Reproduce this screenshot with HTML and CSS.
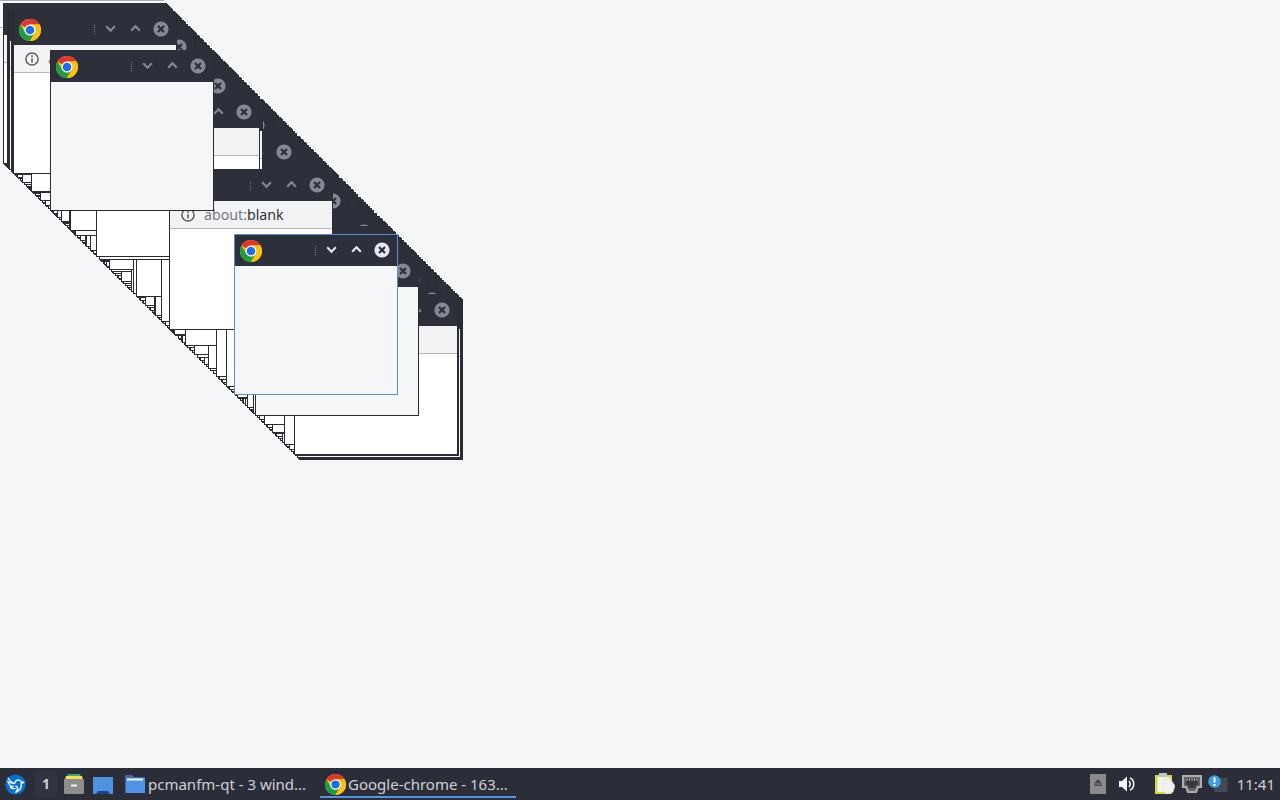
FILE: index.html
```html
<!DOCTYPE html>
<html lang="en">
<head>
  <meta charset="UTF-8">
  <title>Desktop</title>
  <link rel="stylesheet" href="styles.css">
</head>
<body>
  <svg class="defs" width="0" height="0">
    <symbol id="chrome" viewBox="0 0 24 24">
      <circle cx="12" cy="12" r="12" fill="#fbc116"/>
      <path d="M12 12 1.6 6A12 12 0 0 1 22.4 6H12z" fill="#dc3a30"/>
      <path d="M1.6 6A12 12 0 0 0 12 24l5.2-9-5.2 3-5.2-3z" fill="#249a45"/>
      <path d="M12 24A12 12 0 0 0 22.4 6H12l5.2 9z" fill="#fbc116"/>
      <circle cx="12" cy="12" r="6" fill="#fff"/>
      <circle cx="12" cy="12" r="4.7" fill="#1b6fe0"/>
    </symbol>
    <symbol id="down" viewBox="0 0 12 12"><path d="M2 4l4 4 4-4" fill="none" stroke="currentColor" stroke-width="2"/></symbol>
    <symbol id="up" viewBox="0 0 12 12"><path d="M2 8l4-4 4 4" fill="none" stroke="currentColor" stroke-width="2"/></symbol>
    <symbol id="close" viewBox="0 0 16 16">
      <circle cx="8" cy="8" r="7.6" fill="currentColor"/>
      <path d="M5 5l6 6M11 5l-6 6" stroke="#2b2e39" stroke-width="2.2"/>
    </symbol>
    <symbol id="info" viewBox="0 0 14 14">
      <circle cx="7" cy="7" r="6.1" fill="none" stroke="#5c5f63" stroke-width="1.5"/>
      <path d="M7 6.2v4.3M7 3.3v1.6" stroke="#5c5f63" stroke-width="1.6"/>
    </symbol>
  </svg>

  <main class="desktop" id="desktop">
    <div class="back-window"></div>
  </main>

  <footer class="panel">
    <svg class="menu" viewBox="0 0 22 22">
      <circle cx="11" cy="11" r="10.6" fill="#0870cf"/>
      <path d="M3 4c2 4 4 5 7 6-3 0-5-1-7-2 1 3 3 5 6 5-2 1-3 1-4 0 1 2 3 3 6 2" fill="none" stroke="#e2effb" stroke-width="1.3"/>
      <path d="M10 10c1-4 5-5 7-2l3 1-3 .5c1 5-2 8-6 10 3-4 3-6 0-7" fill="none" stroke="#e2effb" stroke-width="1.6"/>
    </svg>
    <span class="pager">1</span>
    <svg class="cabinet" viewBox="0 0 20 20">
      <path d="M4 0h12l1 3H3z" fill="#43a878"/>
      <path d="M2 2h16l1 4H1z" fill="#f3df55"/>
      <rect y="5" width="20" height="15" rx="1" fill="#8d8d8d"/>
      <rect x="7" y="10.5" width="6" height="2" fill="#f4f4f4"/>
    </svg>
    <svg class="show-desktop" viewBox="0 0 20 17">
      <rect width="20" height="17" fill="#4f92e0"/>
      <path d="M5 14h10l2 3H3z" fill="#1c4386"/>
    </svg>
    <div class="task">
      <svg class="folder" viewBox="0 0 20 18">
        <path d="M0 0h7l2 2h11v16H0z" fill="#426aa6"/>
        <path d="M1 3h19v15H1z" fill="#4f92e6"/>
        <path d="M2 3.5h16v2H2z" fill="#eef5ff"/>
      </svg>
      <span>pcmanfm-qt - 3 wind...</span>
    </div>
    <div class="task current">
      <svg class="logo" viewBox="0 0 24 24"><use href="#chrome"/></svg>
      <span>Google-chrome - 163...</span>
    </div>
    <div class="tray">
      <svg class="eject" viewBox="0 0 16 20">
        <rect width="16" height="20" fill="#8b8b8b"/>
        <path d="M8 5l4 4.5H4zM4 10.5h8V12H4z" fill="#45474c"/>
      </svg>
      <svg class="volume" viewBox="0 0 16 16">
        <path d="M0 5h3l5-4.5v15L3 11H0z" fill="#f5f5f5"/>
        <path d="M10 5c1.7 2 1.7 4 0 6M11 2c5 2 5 10 0 12" fill="none" stroke="#f5f5f5" stroke-width="1.5"/>
      </svg>
      <svg class="clip" viewBox="0 0 20 22">
        <rect y="2" width="17" height="19" fill="#d2d848"/>
        <rect x="2.5" y="4" width="12" height="15" fill="#f4f4ea"/>
        <rect x="4" y="0" width="8" height="4" fill="#c4c6bd"/>
        <path d="M9 7l6-2 5 8-2 6-7 2-4-6z" fill="#f1f1f1" stroke="#d5d5d5" stroke-width=".5"/>
      </svg>
      <svg class="net" viewBox="0 0 20 18">
        <path d="M1 1h18v11h-3l-2 5H6l-2-5H1z" fill="#62646a" stroke="#aeaeae" stroke-width="2"/>
        <path d="M4 3h12v7h-2l-1 3H7l-1-3H4z" fill="#37393e"/>
        <path d="M5 3v3M7.5 3v3M10 3v3M12.5 3v3M15 3v3" stroke="#b5b5b5"/>
      </svg>
      <svg class="notify" viewBox="0 0 20 18">
        <rect x="6" y="3" width="13.5" height="14" fill="#454955"/>
        <circle cx="6.5" cy="6.5" r="6.3" fill="#3f9fdc"/>
        <path d="M6.5 2.5v5M6.5 9v2" stroke="#fff" stroke-width="2"/>
      </svg>
      <span class="clock">11:41</span>
    </div>
  </footer>
  <script src="script.js"></script>
</body>
</html>
```
FILE: styles.css
```css
* {
  box-sizing: border-box;
}
body {
  margin: 0;
  height: 100vh;
  display: flex;
  flex-direction: column;
  overflow: hidden;
  background: #f4f6f8;
  font-family: "Noto Sans", "Open Sans", sans-serif;
}
svg {
  display: block;
  flex: none;
}
.defs {
  position: absolute;
}
.desktop {
  flex: 1;
  position: relative;
  overflow: hidden;
}
.back-window {
  width: 164px;
  height: 28px;
  border-top: 1px solid #a9adb6;
  border-bottom: 1px solid #b4b7be;
  background: #f7f9fb;
}

/* cascaded windows */
.window {
  position: absolute;
  width: 164px;
  height: 161px;
  border: 1px solid #292c32;
  border-top-color: #2d303b;
  background: #fff;
  overflow: hidden;
}
.window.plain {
  background: #f4f6f8;
}
.window.active {
  border-color: #5d8ccd;
}
.titlebar {
  height: 31px;
  padding: 0 7px 2px 5px;
  display: flex;
  align-items: center;
  background: #2d303b;
  color: #868993;
}
.active .titlebar {
  color: #e3e8f2;
}
.titlebar .logo {
  width: 22px;
  height: 22px;
  margin-top: 2px;
}
.caption {
  width: 3px;
  height: 9px;
  margin: 1px 0 0 53px;
  overflow: hidden;
  border-left: 1px dotted #777b85;
}
.titlebar .arrow {
  width: 13px;
  height: 13px;
}
.arrow.first {
  margin-left: 7px;
}
.arrow.second {
  margin-left: 12px;
}
.titlebar .close {
  width: 16px;
  height: 16px;
  margin-left: auto;
}
.toolbar {
  height: 28px;
  padding: 1px 0 0 11px;
  display: flex;
  align-items: center;
  gap: 9px;
  background: #f2f3f5;
  border-bottom: 1px solid #b5b6b9;
  font-size: 14.2px;
  color: #303236;
  white-space: nowrap;
}
.toolbar > span {
  margin-top: -1px;
}
.toolbar svg {
  width: 14px;
  height: 14px;
}
.scheme {
  color: #77797d;
}

/* bottom panel */
.panel {
  height: 32px;
  display: flex;
  align-items: center;
  padding: 0 5px;
  background: #2b2e39;
  color: #cfd1d6;
  font-size: 15px;
}
.menu {
  width: 21px;
  height: 21px;
}
.pager {
  width: 22px;
  height: 28px;
  margin-left: 9px;
  line-height: 28px;
  text-align: center;
  font-weight: bold;
  font-size: 14px;
  background: #313440;
}
.cabinet {
  width: 20px;
  height: 20px;
  margin-left: 7px;
}
.show-desktop {
  width: 20px;
  height: 17px;
  margin: 2px 0 0 9px;
}
.task {
  width: 196px;
  height: 32px;
  margin-left: 7px;
  padding: 0 0 0 5px;
  display: flex;
  align-items: center;
  gap: 3px;
  white-space: nowrap;
}
.task span,
.clock {
  padding-bottom: 1px;
}
.task.current {
  margin-left: 4px;
  background: linear-gradient(#5294e2, #5294e2) 0 28px / 100% 2px no-repeat;
}
.folder {
  width: 20px;
  height: 18px;
}
.task .logo {
  width: 21px;
  height: 21px;
  margin-right: -1px;
}
.tray {
  margin-left: auto;
  display: flex;
  align-items: center;
}
.eject {
  width: 16px;
  height: 20px;
}
.volume {
  width: 16px;
  height: 16px;
  margin-left: 13px;
}
.clip {
  width: 20px;
  height: 22px;
  margin-left: 20px;
}
.net {
  width: 20px;
  height: 18px;
  margin-left: 7px;
}
.notify {
  width: 20px;
  height: 18px;
  margin: 0 9px 0 6px;
}
```
FILE: script.js
```js
// window offsets, front to back; every window sits on the diagonal
const stack = [
  234, 255, 50, 169, 13, 96, 99, 294, 295, 297, 298, 299,
  12, 11, 9, 8, 7, 3,
  4, 5, 6, 31, 14, 22, 24, 26, 27, 28, 29, 30, 17, 15, 16, 18, 20, 21,
  32, 40, 45, 48, 46, 42, 43, 33, 35, 36, 38, 39,
  70, 69, 61, 62, 57, 53, 51, 52, 54, 55, 56, 59, 63, 65, 64, 67, 68,
  75, 90, 86, 85, 80, 71, 72, 73, 74, 77, 78, 82, 83, 88, 93, 94, 91,
  161, 136, 133, 109, 131, 111, 121, 100, 101, 106, 107, 104, 103, 105,
  113, 112, 115, 118, 117, 119, 123, 122, 125, 127, 129, 128,
  155, 154, 145, 137, 140, 143, 142, 139, 147, 150, 149, 152, 153, 157, 159, 158,
  165, 163, 162, 167, 168,
  226, 216, 185, 208, 210, 194, 197, 204, 200, 199, 202, 206, 213,
  174, 175, 170, 171, 172, 173, 182, 181, 184, 178, 179, 187, 186, 190, 189, 192,
  219, 218, 222, 221, 224, 223, 229, 228, 227, 231, 232,
  253, 247, 237, 238, 245, 243, 242, 240, 235, 249, 250, 251, 252,
  284, 264, 272, 273, 282, 276, 278, 275, 280, 259, 257, 261, 262, 267, 269, 270, 266,
  289, 286, 285, 287, 291, 293
];
const plain = [50, 234, 255];

const desktop = document.getElementById('desktop');

stack.forEach((offset, i) => {
  const win = document.createElement('section');
  win.className = 'window';
  if (plain.includes(offset)) win.classList.add('plain');
  if (i === 0) win.classList.add('active');
  win.style.left = offset + 'px';
  win.style.top = offset + 'px';
  win.style.zIndex = stack.length - i;
  win.innerHTML = `
    <div class="titlebar">
      <svg class="logo"><use href="#chrome"/></svg>
      <span class="caption"></span>
      <svg class="arrow first"><use href="#down"/></svg>
      <svg class="arrow second"><use href="#up"/></svg>
      <svg class="close"><use href="#close"/></svg>
    </div>`;
  if (!plain.includes(offset)) {
    const address = offset === 13 || offset === 169
      ? '<svg><use href="#info"/></svg><span><span class="scheme">about:</span>blank</span>' : '';
    if (i < 18) win.innerHTML += `<div class="toolbar">${address}</div>`;
  }
  desktop.appendChild(win);
});
```
